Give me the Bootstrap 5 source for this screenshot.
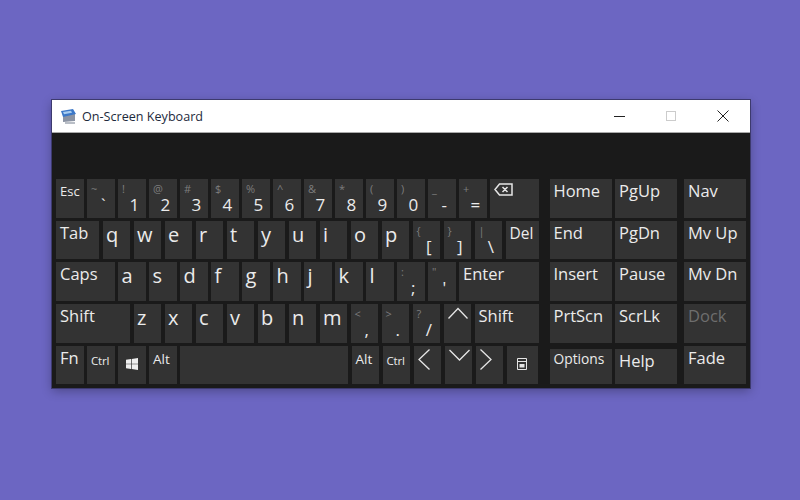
<!DOCTYPE html>
<html lang="en">
<head>
  <meta charset="UTF-8">
  <title>On-Screen Keyboard</title>
  <link href="https://cdn.jsdelivr.net/npm/bootstrap@5.3.0/dist/css/bootstrap.min.css" rel="stylesheet">
  <style>
    body { background: #6c66c2; font-family: "Open Sans", "Noto Sans", sans-serif; width: 800px; height: 500px; overflow: hidden; }
    .osk-window { width: 698px; height: 288px; margin: 100px 0 0 52px; background: #1a1a1a; box-shadow: 0 0 0 1px #3d3a6e, 0 3px 10px rgba(0,0,0,.3); }
    .osk-title { height: 33px; background: #fff; padding: 2px 0 0 8px; color: #1d2a3c; font-size: 12.6px; border-bottom: 1px solid #aaa; }
    .osk-appicon { margin-right: 4px; margin-top: -2px; }
    .osk-ctrl { width: 52px; }
    .osk-ctrls { margin-right: 1px; margin-top: -2px; }
    .osk-body { padding: 46px 4px 0 4px; }
    .osk-main { width: 482px; }
    .osk-row { gap: 3.5px; height: 38.5px; margin-bottom: 3.2px; }
    .osk-side { width: 128px; margin-left: 11.5px; }
    .osk-nav { width: 62px; margin-left: 6.5px; }
    .osk-key { width: 27.5px; height: 38.5px; flex: none; background: #333; color: #ebebeb; border: 0; border-radius: 0; padding: 0 0 0 4px; font-size: 16px; line-height: 1; text-align: left; display: flex; flex-direction: column; }
    .osk-key:hover, .osk-key:active { background: #333; color: #ebebeb; }
    .osk-sm { font-size: 11.5px; padding-top: 9px; letter-spacing: -.2px; }
    .osk-md { font-size: 13.5px; padding-top: 7px; }
    .osk-esc { font-size: 13px; padding-top: 6px; }
    .osk-lbl { font-size: 15.5px; padding-top: 5px; }
    .osk-big { font-size: 16.5px; padding-top: 4px; }
    .osk-let { font-size: 20px; padding: 0 0 0 3.5px; line-height: 1.35; }
    .osk-two { padding: 0 4px 0 4px; }
    .osk-up { color: #7d7d7d; font-size: 11px; line-height: 1; padding-top: 4px; height: 17px; }
    .osk-dn { align-self: center; font-size: 17px; line-height: 1; margin-left: 5px; }
    .osk-ic { align-items: center; justify-content: center; padding: 0 0 2px 0; }
    .osk-arw { align-items: flex-start; padding: 3px 0 0 4px; }
    .osk-w43 { width: 43px; }
    .osk-w58 { width: 58.5px; }
    .osk-w74 { width: 74px; }
    .osk-w49 { width: 48.5px; }
    .osk-w33 { width: 33px; }
    .osk-w32 { width: 31.5px; }
    .osk-w80 { width: 79.5px; }
    .osk-w64 { width: 64px; }
    .osk-w168 { width: 168px; }
    .osk-w62 { width: 62px; }
    .osk-short { height: 35px; margin-top: 3.5px; }
    .osk-short.osk-md { padding-top: 3px; font-size: 13.8px; }
    .osk-off { color: #6e6e6e; }
    .osk-off:hover { color: #6e6e6e; }
  </style>
</head>
<body>

<div class="osk-window">
  <div class="osk-title d-flex align-items-center">
    <svg class="osk-appicon" width="18" height="17" viewBox="0 0 18 17">
      <path d="M3 6l12 -1v8l-12 1z" fill="#8b93a3"/>
      <path d="M1 3l12-2 3 5-13 3z" fill="#3c78c8"/>
      <path d="M3 4l8-1.3 1 2-8 1.600z" fill="#a9cdf0"/>
      <path d="M5 14h10v2H5z" fill="#b9bec6"/>
    </svg>
    <span>On-Screen Keyboard</span>
    <div class="osk-ctrls ms-auto d-flex">
      <div class="osk-ctrl d-flex justify-content-center"><svg width="12" height="12"><path d="M1 6.500h11" stroke="#222" fill="none"/></svg></div>
      <div class="osk-ctrl d-flex justify-content-center"><svg width="12" height="12"><rect x="1.500" y="1.500" width="9" height="9" fill="none" stroke="#ccc"/></svg></div>
      <div class="osk-ctrl d-flex justify-content-center"><svg width="12" height="12"><path d="M.5.500l11 11M11.500.500l-11 11" stroke="#222" fill="none"/></svg></div>
    </div>
  </div>

  <div class="osk-body d-flex">
    <div class="osk-main">
      <div class="osk-row d-flex">
        <button class="btn osk-key osk-esc">Esc</button>
        <button class="btn osk-key osk-two"><span class="osk-up">~</span><span class="osk-dn">`</span></button>
        <button class="btn osk-key osk-two"><span class="osk-up">!</span><span class="osk-dn">1</span></button>
        <button class="btn osk-key osk-two"><span class="osk-up">@</span><span class="osk-dn">2</span></button>
        <button class="btn osk-key osk-two"><span class="osk-up">#</span><span class="osk-dn">3</span></button>
        <button class="btn osk-key osk-two"><span class="osk-up">$</span><span class="osk-dn">4</span></button>
        <button class="btn osk-key osk-two"><span class="osk-up">%</span><span class="osk-dn">5</span></button>
        <button class="btn osk-key osk-two"><span class="osk-up">^</span><span class="osk-dn">6</span></button>
        <button class="btn osk-key osk-two"><span class="osk-up">&amp;</span><span class="osk-dn">7</span></button>
        <button class="btn osk-key osk-two"><span class="osk-up">*</span><span class="osk-dn">8</span></button>
        <button class="btn osk-key osk-two"><span class="osk-up">(</span><span class="osk-dn">9</span></button>
        <button class="btn osk-key osk-two"><span class="osk-up">)</span><span class="osk-dn">0</span></button>
        <button class="btn osk-key osk-two"><span class="osk-up">_</span><span class="osk-dn">-</span></button>
        <button class="btn osk-key osk-two"><span class="osk-up">+</span><span class="osk-dn">=</span></button>
        <button class="btn osk-key osk-w49" aria-label="Backspace">
          <svg class="mt-1" width="19" height="13" viewBox="0 0 19 13"><path d="M5.500 1h12.500v11H5.500L1 6.500z M8.500 4l5 5M13.500 4l-5 5" fill="none" stroke="#e6e6e6" stroke-width="1.500"/></svg>
        </button>
      </div>
      <div class="osk-row d-flex">
        <button class="btn osk-key osk-w43 osk-big">Tab</button>
        <button class="btn osk-key osk-let">q</button>
        <button class="btn osk-key osk-let">w</button>
        <button class="btn osk-key osk-let">e</button>
        <button class="btn osk-key osk-let">r</button>
        <button class="btn osk-key osk-let">t</button>
        <button class="btn osk-key osk-let">y</button>
        <button class="btn osk-key osk-let">u</button>
        <button class="btn osk-key osk-let">i</button>
        <button class="btn osk-key osk-let">o</button>
        <button class="btn osk-key osk-let">p</button>
        <button class="btn osk-key osk-two"><span class="osk-up">{</span><span class="osk-dn">[</span></button>
        <button class="btn osk-key osk-two"><span class="osk-up">}</span><span class="osk-dn">]</span></button>
        <button class="btn osk-key osk-two"><span class="osk-up">|</span><span class="osk-dn">\</span></button>
        <button class="btn osk-key osk-w33 osk-lbl">Del</button>
      </div>
      <div class="osk-row d-flex">
        <button class="btn osk-key osk-w58 osk-big">Caps</button>
        <button class="btn osk-key osk-let">a</button>
        <button class="btn osk-key osk-let">s</button>
        <button class="btn osk-key osk-let">d</button>
        <button class="btn osk-key osk-let">f</button>
        <button class="btn osk-key osk-let">g</button>
        <button class="btn osk-key osk-let">h</button>
        <button class="btn osk-key osk-let">j</button>
        <button class="btn osk-key osk-let">k</button>
        <button class="btn osk-key osk-let">l</button>
        <button class="btn osk-key osk-two"><span class="osk-up">:</span><span class="osk-dn">;</span></button>
        <button class="btn osk-key osk-two"><span class="osk-up">"</span><span class="osk-dn">'</span></button>
        <button class="btn osk-key osk-w80 osk-big">Enter</button>
      </div>
      <div class="osk-row d-flex">
        <button class="btn osk-key osk-w74 osk-big">Shift</button>
        <button class="btn osk-key osk-let">z</button>
        <button class="btn osk-key osk-let">x</button>
        <button class="btn osk-key osk-let">c</button>
        <button class="btn osk-key osk-let">v</button>
        <button class="btn osk-key osk-let">b</button>
        <button class="btn osk-key osk-let">n</button>
        <button class="btn osk-key osk-let">m</button>
        <button class="btn osk-key osk-two"><span class="osk-up">&lt;</span><span class="osk-dn">,</span></button>
        <button class="btn osk-key osk-two"><span class="osk-up">&gt;</span><span class="osk-dn">.</span></button>
        <button class="btn osk-key osk-two"><span class="osk-up">?</span><span class="osk-dn">/</span></button>
        <button class="btn osk-key osk-arw" aria-label="Up"><svg width="20" height="13" viewBox="0 0 20 13"><path d="M.5 11.500L10 1.500l9.500 10" fill="none" stroke="#e6e6e6" stroke-width="1.300"/></svg></button>
        <button class="btn osk-key osk-w64 osk-big">Shift</button>
      </div>
      <div class="osk-row d-flex">
        <button class="btn osk-key osk-big">Fn</button>
        <button class="btn osk-key osk-sm">Ctrl</button>
        <button class="btn osk-key osk-ic" aria-label="Windows"><svg width="12" height="12" viewBox="0 0 12 12"><path d="M0 1.700l5-.7v4.700H0zM5.700.900L12 0v5.700H5.700zM0 6.300h5V11l-5-.7zM5.700 6.300H12V12l-6.300-.9z" fill="#eee"/></svg></button>
        <button class="btn osk-key osk-md">Alt</button>
        <button class="btn osk-key osk-w168" aria-label="Space"></button>
        <button class="btn osk-key osk-md">Alt</button>
        <button class="btn osk-key osk-sm">Ctrl</button>
        <button class="btn osk-key osk-arw" aria-label="Left"><svg width="12" height="22" viewBox="0 0 12 22"><path d="M11.500.5L1 10.500l10.500 10" fill="none" stroke="#e6e6e6" stroke-width="1.300"/></svg></button>
        <button class="btn osk-key osk-arw" aria-label="Down"><svg width="21" height="13" viewBox="0 0 21 13"><path d="M.5 1l10 10 10-10" fill="none" stroke="#e6e6e6" stroke-width="1.300"/></svg></button>
        <button class="btn osk-key osk-arw" aria-label="Right"><svg width="12" height="22" viewBox="0 0 12 22"><path d="M.5.5L11 10.500.5 20.500" fill="none" stroke="#e6e6e6" stroke-width="1.300"/></svg></button>
        <button class="btn osk-key osk-ic osk-w32" aria-label="Menu"><svg width="10" height="12" viewBox="0 0 10 12"><path d="M.5.500h9v11h-9z M.5 3.500h9" fill="none" stroke="#e6e6e6"/><path d="M2.500 6h5v3.500h-5z" fill="#e6e6e6"/></svg></button>
      </div>
    </div>

    <div class="osk-side">
      <div class="osk-row d-flex"><button class="btn osk-key osk-w62 osk-big">Home</button><button class="btn osk-key osk-w62 osk-big">PgUp</button></div>
      <div class="osk-row d-flex"><button class="btn osk-key osk-w62 osk-big">End</button><button class="btn osk-key osk-w62 osk-big">PgDn</button></div>
      <div class="osk-row d-flex"><button class="btn osk-key osk-w62 osk-big">Insert</button><button class="btn osk-key osk-w62 osk-big">Pause</button></div>
      <div class="osk-row d-flex"><button class="btn osk-key osk-w62 osk-big">PrtScn</button><button class="btn osk-key osk-w62 osk-big">ScrLk</button></div>
      <div class="osk-row d-flex"><button class="btn osk-key osk-w62 osk-short osk-md">Options</button><button class="btn osk-key osk-w62 osk-short osk-big">Help</button></div>
    </div>

    <div class="osk-nav">
      <div class="osk-row"><button class="btn osk-key osk-w62 osk-big">Nav</button></div>
      <div class="osk-row"><button class="btn osk-key osk-w62 osk-big">Mv Up</button></div>
      <div class="osk-row"><button class="btn osk-key osk-w62 osk-big">Mv Dn</button></div>
      <div class="osk-row"><button class="btn osk-key osk-w62 osk-big osk-off">Dock</button></div>
      <div class="osk-row"><button class="btn osk-key osk-w62 osk-big">Fade</button></div>
    </div>
  </div>
</div>

<script src="https://cdn.jsdelivr.net/npm/bootstrap@5.3.0/dist/js/bootstrap.bundle.min.js"></script>
</body>
</html>
